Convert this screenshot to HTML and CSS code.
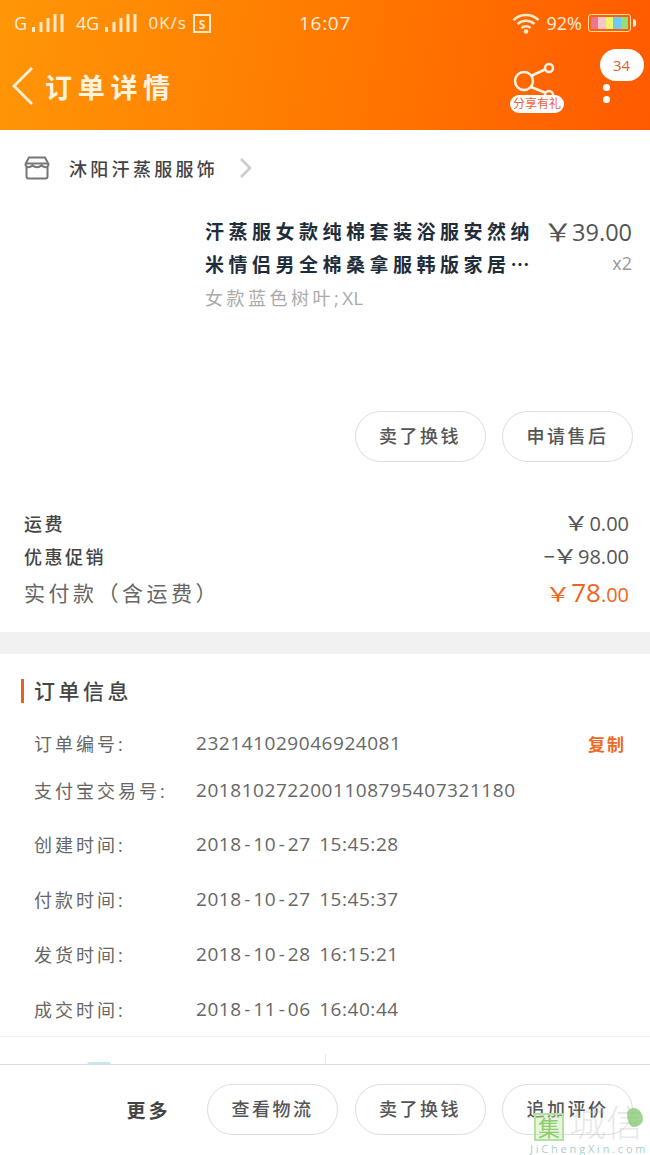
FILE: index.html
```html
<!DOCTYPE html>
<html lang="zh-CN">
<head>
    <meta charset="UTF-8">
    <meta name="viewport" content="width=device-width, initial-scale=1.0">
    <title>订单详情</title>
    <link rel="stylesheet" href="styles.css">
</head>
<body>
    <div class="page">
        <header class="top">
            <div class="status">
                <div class="status-left">
                    <span class="net">G</span>
                    <svg class="bars" width="32" height="20" viewBox="0 0 32 20"><path d="M1.500 19v-5M9 19v-10M16 19v-14M23 19v-18M30 19v-18" stroke="#ffe9c8" stroke-width="3"/></svg>
                    <span class="net net-4g">4G</span>
                    <svg class="bars" width="32" height="20" viewBox="0 0 32 20"><path d="M1.500 19v-5M9 19v-10M16 19v-14M23 19v-18M30 19v-18" stroke="#ffe9c8" stroke-width="3"/></svg>
                    <span class="speed">0K/s</span>
                    <svg class="sim" width="18" height="19" viewBox="0 0 18 19"><rect x="1" y="1" width="16" height="17" fill="none" stroke="#ffe9c8" stroke-width="2"/><text x="9" y="14.500" text-anchor="middle" class="sim-letter">S</text></svg>
                </div>
                <div class="clock">16:07</div>
                <div class="status-right">
                    <svg width="28" height="22" viewBox="0 0 28 22"><path d="M1.500 8a18 18 0 0 1 25 0M5.500 12a12.500 12.500 0 0 1 17 0M9.500 16a6.500 6.500 0 0 1 9 0" fill="none" stroke="#ffe9c8" stroke-width="2.500"/><circle cx="14" cy="19.500" r="2.300" fill="#ffe9c8"/></svg>
                    <span class="percent">92%</span>
                    <div class="battery">
                        <i class="c1"></i><i class="c2"></i><i class="c3"></i><i class="c4"></i><i class="c5"></i>
                    </div>
                    <span class="battery-tip"></span>
                </div>
            </div>
            <div class="nav">
                <svg class="back" width="24" height="40" viewBox="0 0 24 40"><path d="M21 2L3 20l18 18" fill="none" stroke="#ffeeda" stroke-width="2.800"/></svg>
                <h1 class="nav-title">订单详情</h1>
                <div class="share">
                    <svg width="46" height="42" viewBox="0 0 46 42"><g fill="none" stroke="#fff3e6" stroke-width="2.500"><circle cx="13" cy="19" r="9"/><circle cx="38" cy="6" r="4"/><circle cx="38" cy="33" r="4"/><path d="M20 14l15-7M20 25l15 6"/></g></svg>
                    <span class="share-tag">分享有礼</span>
                </div>
                <div class="more">
                    <span class="more-badge">34</span>
                    <span class="dot"></span>
                    <span class="dot"></span>
                </div>
            </div>
        </header>

        <section class="order">
            <div class="shop">
                <svg class="shop-icon" width="26" height="24" viewBox="0 0 26 24"><g fill="none" stroke="#777" stroke-width="2"><path d="M5 1.500h16l3.500 6.500a3 3 0 0 1-3 3.200c-2 0-3-1-4-2-1 1-2.500 2-4.500 2s-3.500-1-4.500-2c-1 1-2 2-4 2a3 3 0 0 1-3-3.200z"/><path d="M2.500 11v9.500a2 2 0 0 0 2 2h17a2 2 0 0 0 2-2V11"/><path d="M2 7.500h22"/></g></svg>
                <span class="shop-name">沐阳汗蒸服服饰</span>
                <svg width="14" height="22" viewBox="0 0 14 22"><path d="M2 2l9 9-9 9" fill="none" stroke="#ccc" stroke-width="2.500"/></svg>
            </div>
            <div class="item">
                <div class="item-info">
                    <div class="item-title">汗蒸服女款纯棉套装浴服安然纳<br>米情侣男全棉桑拿服韩版家居<span class="ell">…</span></div>
                    <div class="item-sku">女款蓝色树叶;<span class="sku-en">XL</span></div>
                </div>
                <div class="item-price">
                    <div class="price"><span class="yen">￥</span>39.00</div>
                    <div class="qty">x2</div>
                </div>
            </div>
            <div class="item-actions">
                <span class="pill">卖了换钱</span>
                <span class="pill">申请售后</span>
            </div>
            <div class="fee">
                <div class="fee-row"><span>运费</span><span class="fee-val"><span class="yen">￥</span>0.00</span></div>
                <div class="fee-row"><span>优惠促销</span><span class="fee-val">−<span class="yen">￥</span>98.00</span></div>
                <div class="fee-row fee-total"><span>实付款（含运费）</span><span class="fee-pay"><span class="yen">￥</span><b>78</b>.00</span></div>
            </div>
        </section>

        <div class="gap"></div>

        <section class="info">
            <h2 class="info-title">订单信息</h2>
            <div class="info-row row-first"><span class="info-label">订单编号:</span><span class="info-val">232141029046924081</span><span class="copy">复制</span></div>
            <div class="info-row row-second"><span class="info-label">支付宝交易号:</span><span class="info-val">2018102722001108795407321180</span></div>
            <div class="info-row"><span class="info-label">创建时间:</span><span class="info-val">2018<i class="dash">-</i>10<i class="dash">-</i>27 15:45:28</span></div>
            <div class="info-row"><span class="info-label">付款时间:</span><span class="info-val">2018<i class="dash">-</i>10<i class="dash">-</i>27 15:45:37</span></div>
            <div class="info-row"><span class="info-label">发货时间:</span><span class="info-val">2018<i class="dash">-</i>10<i class="dash">-</i>28 16:15:21</span></div>
            <div class="info-row"><span class="info-label">成交时间:</span><span class="info-val">2018<i class="dash">-</i>11<i class="dash">-</i>06 16:40:44</span></div>
        </section>

        <div class="under">
            <div class="under-left"><span class="under-mark"></span></div>
            <div class="under-right"></div>
        </div>

        <footer class="bottom">
            <span class="more-text">更多</span>
            <span class="pill">查看物流</span>
            <span class="pill">卖了换钱</span>
            <span class="pill">追加评价</span>
        </footer>

        <div class="watermark">
            <div class="wm-top"><span class="wm-box">集</span><span class="wm-name">城信</span><span class="wm-leaf"></span></div>
            <div class="wm-url">JiChengXin.com</div>
        </div>
    </div>
</body>
</html>
```

FILE: styles.css
```css
* {
    box-sizing: border-box;
}
body {
    margin: 0;
    background-color: #fff;
    font-family: "Open Sans", "Noto Sans CJK SC", sans-serif;
    color: #555;
}
.page {
    position: relative;
    width: 650px;
    height: 1155px;
    overflow: hidden;
    display: flex;
    flex-direction: column;
}
.yen {
    display: inline-block;
    margin-right: 3px;
    transform: scaleX(1.3);
}

/* top bar */
.top {
    height: 130px;
    flex: none;
    background: linear-gradient(100deg, #ff9607 0%, #ff7a00 50%, #ff5a00 100%);
    color: #fff;
}
.status {
    height: 44px;
    position: relative;
    display: flex;
    justify-content: space-between;
    align-items: center;
    padding: 2px 14px 0 14px;
    color: #ffeeda;
}
.status-left, .status-right {
    display: flex;
    align-items: center;
}
.net {
    font-size: 18px;
    margin-right: 5px;
}
.net-4g {
    margin-left: 12px;
    margin-right: 7px;
    letter-spacing: -0.5px;
}
.speed {
    font-size: 17px;
    letter-spacing: 1px;
    margin: 0 6px 2px 11px;
}
.sim-letter {
    font-size: 12px;
    font-weight: 700;
    fill: #ffe9c8;
}
.clock {
    position: absolute;
    left: 299px;
    top: 10px;
    font-size: 19px;
    letter-spacing: 0.700px;
}
.percent {
    font-size: 18px;
    margin: 0 6px 0 7px;
}
.battery {
    width: 43px;
    height: 18px;
    border: 1px solid #ffd9a8;
    border-radius: 3px;
    padding: 2px;
    display: flex;
}
.battery i {
    flex: 1;
}
.c1 { background-color: #e8788e; }
.c2 { background-color: #f9c4cc; }
.c3 { background-color: #eef56e; }
.c4 { background-color: #6fc9f7; }
.c5 { background-color: #8fe07a; }
.battery-tip {
    width: 3px;
    height: 8px;
    margin-left: 2px;
    background-color: #ffeeda;
    border-radius: 0 3px 3px 0;
}
.nav {
    height: 86px;
    position: relative;
    display: flex;
    align-items: center;
    padding: 0 0 2px 11px;
}
.nav-title {
    margin: 0 0 0 10px;
    font-size: 27px;
    font-weight: 700;
    letter-spacing: 5.700px;
    color: #fff3e2;
}
.share {
    position: absolute;
    left: 510px;
    top: 18px;
    width: 54px;
}
.share svg {
    display: block;
    margin-left: 1px;
}
.share-tag {
    position: absolute;
    left: 0;
    top: 33px;
    width: 54px;
    height: 18px;
    line-height: 18px;
    border-radius: 9px;
    background-color: #fff;
    color: #e8623a;
    font-size: 12px;
    text-align: center;
    white-space: nowrap;
}
.more {
    position: absolute;
    left: 599px;
    top: 5px;
    width: 45px;
    display: flex;
    flex-direction: column;
    align-items: center;
}
.more-badge {
    width: 44px;
    height: 32px;
    line-height: 32px;
    border-radius: 16px;
    background-color: #fff;
    color: #d9643a;
    font-size: 15px;
    text-align: center;
    margin-bottom: 3px;
}
.dot {
    width: 7px;
    height: 7px;
    margin-bottom: 5px;
    border-radius: 50%;
    background-color: #fff;
    position: relative;
    left: -15px;
}

/* order */
.order {
    height: 502px;
    flex: none;
}
.shop {
    height: 76px;
    display: flex;
    align-items: center;
    padding: 0 0 0 24px;
}
.shop-name {
    margin: 0 21px 0 19px;
    font-size: 18px;
    font-weight: 500;
    letter-spacing: 3.300px;
    color: #444;
}
.item {
    height: 205px;
    display: flex;
    justify-content: space-between;
    padding: 11px 18px 0 205px;
}
.item-title {
    font-size: 19px;
    font-weight: 700;
    letter-spacing: 4.500px;
    line-height: 31px;
    color: #1f2d3a;
    white-space: nowrap;
}
.ell {
    font-family: "Noto Sans CJK SC", sans-serif;
    letter-spacing: 0;
}
.item-sku {
    margin-top: 3px;
    font-size: 18px;
    letter-spacing: 3.500px;
    color: #aaa;
}
.sku-en {
    font-size: 19px;
    letter-spacing: 0;
}
.item-price {
    text-align: right;
}
.price {
    font-size: 23.500px;
    line-height: 31px;
    color: #555;
}
.qty {
    font-size: 18px;
    line-height: 31px;
    color: #999;
}
.item-actions {
    height: 50px;
    display: flex;
    justify-content: flex-end;
    gap: 16.500px;
    padding-right: 17px;
}
.pill {
    width: 131px;
    height: 51px;
    line-height: 49px;
    border: 1px solid #ddd;
    border-radius: 26px;
    background-color: #fff;
    text-align: center;
    font-size: 18px;
    font-weight: 500;
    letter-spacing: 2.500px;
    color: #555;
}
.fee {
    padding: 45px 21px 0 24px;
}
.fee-row {
    height: 33px;
    display: flex;
    justify-content: space-between;
    align-items: center;
    font-size: 18px;
    font-weight: 500;
    letter-spacing: 2.500px;
    color: #444;
}
.fee-val {
    font-size: 20px;
    font-weight: 400;
    letter-spacing: 0;
    color: #555;
}
.fee-total {
    height: 40px;
    font-size: 21px;
    font-weight: 400;
    letter-spacing: 3.500px;
    color: #666;
}
.fee-pay {
    font-size: 20px;
    letter-spacing: 0;
    color: #f0641e;
}
.fee-pay b {
    font-size: 26px;
    font-weight: 400;
}
.gap {
    height: 22px;
    flex: none;
    background-color: #f1f1f1;
}

/* order info */
.info {
    height: 383px;
    flex: none;
    border-bottom: 1px solid #f0f0f0;
}
.info-title {
    margin: 25px 0 20px 21px;
    padding-left: 10px;
    height: 24px;
    line-height: 24px;
    border-left: 3px solid #e8601c;
    font-size: 21px;
    font-weight: 500;
    letter-spacing: 3.500px;
    color: #444;
}
.info-row {
    height: 55px;
    display: flex;
    align-items: center;
    padding: 0 24px 0 34px;
    font-size: 18px;
    letter-spacing: 3px;
    color: #666;
}
.row-first {
    height: 40px;
    margin-bottom: 3px;
}
.row-second {
    height: 47px;
    margin-bottom: 3px;
}
.info-label {
    width: 162px;
    flex: none;
    white-space: nowrap;
}
.info-val {
    flex: 1;
    font-size: 19px;
    letter-spacing: 0.550px;
    word-spacing: 3px;
    color: #666;
    white-space: nowrap;
}
.dash {
    font-style: normal;
    margin: 0 2.500px;
}
.copy {
    font-weight: 700;
    font-size: 17px;
    letter-spacing: 2px;
    color: #ee6a25;
}

/* strip between info and footer */
.under {
    height: 27px;
    flex: none;
    display: flex;
    overflow: hidden;
}
.under-left {
    width: 326px;
    border-right: 1px solid #e8e8e8;
    margin-top: 17px;
    padding: 8px 0 0 87px;
}
.under-mark {
    display: block;
    width: 24px;
    height: 3px;
    border-radius: 12px 12px 0 0;
    background-color: #c5e6f5;
}
.bottom {
    flex: 1;
    display: flex;
    align-items: center;
    justify-content: flex-end;
    gap: 16.500px;
    padding: 0 17px 0 0;
    border-top: 1px solid #ddd;
    background-color: #fff;
}
.bottom .pill {
    margin-bottom: 1px;
}
.more-text {
    margin-right: 20px;
    font-size: 19px;
    font-weight: 700;
    letter-spacing: 3px;
    color: #444;
}

/* watermark over the corner */
.watermark {
    position: absolute;
    left: 530px;
    top: 1103px;
    width: 120px;
    pointer-events: none;
}
.wm-top {
    position: relative;
    height: 40px;
    display: flex;
    align-items: center;
    padding-left: 4px;
}
.wm-box {
    width: 30px;
    height: 28px;
    margin-top: 8px;
    line-height: 24px;
    border: 2px solid #b5dfa0;
    background-color: rgba(200, 235, 170, 0.45);
    color: #8ccb6e;
    font-size: 22px;
    text-align: center;
}
.wm-name {
    margin-left: 5px;
    font-size: 37px;
    font-weight: 300;
    line-height: 40px;
    color: rgba(190, 190, 190, 0.35);
    white-space: nowrap;
}
.wm-leaf {
    position: absolute;
    left: 97px;
    top: 5px;
    width: 16px;
    height: 19px;
    border-radius: 40% 60% 60% 40% / 30% 60% 40% 70%;
    background-color: rgba(130, 200, 110, 0.75);
}
.wm-url {
    font-size: 11px;
    line-height: 12px;
    letter-spacing: 2.800px;
    color: #a8cfc8;
    white-space: nowrap;
}
```
